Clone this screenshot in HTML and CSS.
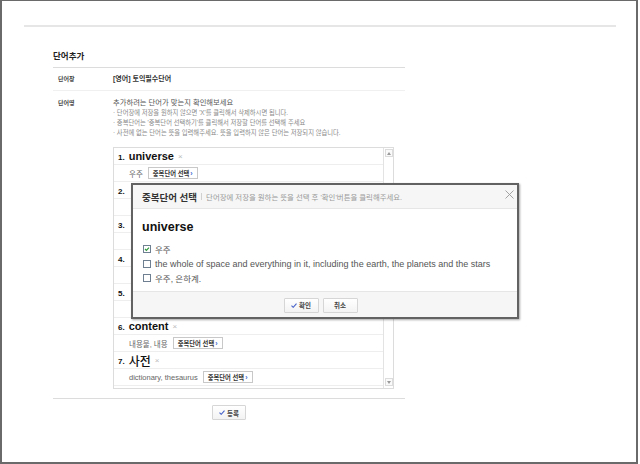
FILE: index.html
```html
<!DOCTYPE html>
<html lang="ko">
<head>
<meta charset="utf-8">
<title>단어추가</title>
<link rel="stylesheet" href="styles.css">
</head>
<body>
<div class="frame">
  <div class="panel">
    <h2 class="title">단어추가</h2>
    <div class="row row-book">
      <div class="label">단어장</div>
      <div class="value strong">[영어] 토익필수단어</div>
    </div>
    <div class="row row-words">
      <div class="label">단어명</div>
      <div class="value">
        <p class="guide">추가하려는 단어가 맞는지 확인해보세요</p>
        <ul class="notes">
          <li>· 단어장에 저장을 원하지 않으면 'X'를 클릭해서 삭제하시면 됩니다.</li>
          <li>· 중복단어는 '중복단어 선택하기'를 클릭해서 저장할 단어를 선택해 주세요</li>
          <li>· 사전에 없는 단어는 뜻을 입력해주세요. 뜻을 입력하지 않은 단어는 저장되지 않습니다.</li>
        </ul>
        <div class="wordbox">
          <div class="list">
            <div class="item-title"><span class="num">1.</span><span class="word">universe</span><span class="del">×</span></div>
            <div class="item-mean">우주<span class="dup">중복단어 선택<i>›</i></span></div>
            <div class="item-title"><span class="num">2.</span></div>
            <div class="item-mean"></div>
            <div class="item-title"><span class="num">3.</span></div>
            <div class="item-mean"></div>
            <div class="item-title"><span class="num">4.</span></div>
            <div class="item-mean"></div>
            <div class="item-title"><span class="num">5.</span></div>
            <div class="item-mean"></div>
            <div class="item-title"><span class="num">6.</span><span class="word">content</span><span class="del">×</span></div>
            <div class="item-mean">내용물, 내용<span class="dup">중복단어 선택<i>›</i></span></div>
            <div class="item-title"><span class="num">7.</span><span class="word ko">사전</span><span class="del">×</span></div>
            <div class="item-mean">dictionary, thesaurus<span class="dup">중복단어 선택<i>›</i></span></div>
          </div>
          <div class="scroll">
            <span class="arrow"><svg width="4" height="3" viewBox="0 0 4 3"><path d="M0 3 L2 0 L4 3Z" fill="#9a9a9a"/></svg></span>
            <span class="arrow"><svg width="4" height="3" viewBox="0 0 4 3"><path d="M0 0 L2 3 L4 0Z" fill="#9a9a9a"/></svg></span>
          </div>
        </div>
      </div>
    </div>
    <div class="actions">
      <button class="btn btn-submit" type="button"><svg class="chk" width="6" height="5" viewBox="0 0 6 5"><path d="M0.5 2.6 L2.2 4.3 L5.5 0.6" fill="none" stroke="#4a64c8" stroke-width="1.1"/></svg>등록</button>
    </div>
  </div>

  <div class="modal">
    <div class="modal-head">
      <strong class="modal-title">중복단어 선택</strong>
      <span class="bar"></span>
      <span class="modal-desc">단어장에 저장을 원하는 뜻을 선택 후 '확인'버튼을 클릭해주세요.</span>
      <svg class="close" width="9" height="9" viewBox="0 0 9 9"><path d="M0.5 0.5 L8.5 8.5 M8.5 0.5 L0.5 8.5" stroke="#9a9a9a" stroke-width="0.9"/></svg>
    </div>
    <div class="modal-body">
      <div class="modal-word">universe</div>
      <label class="opt"><svg class="cb" width="8" height="8" viewBox="0 0 8 8"><rect x="0.5" y="0.5" width="7" height="7" fill="#fff" stroke="#6d7f90"/><path d="M2 4 L3.4 5.4 L6 2.6" fill="none" stroke="#2f9a3a" stroke-width="1.2"/></svg><span class="ko-txt">우주</span></label>
      <label class="opt"><svg class="cb" width="8" height="8" viewBox="0 0 8 8"><rect x="0.5" y="0.5" width="7" height="7" fill="#fff" stroke="#6d7f90"/></svg><span>the whole of space and everything in it, including the earth, the planets and the stars</span></label>
      <label class="opt"><svg class="cb" width="8" height="8" viewBox="0 0 8 8"><rect x="0.5" y="0.5" width="7" height="7" fill="#fff" stroke="#6d7f90"/></svg><span class="ko-txt">우주, 은하계.</span></label>
    </div>
    <div class="modal-foot">
      <button class="btn btn-modal" type="button"><svg class="chk" width="6" height="5" viewBox="0 0 6 5"><path d="M0.5 2.6 L2.2 4.3 L5.5 0.6" fill="none" stroke="#4a64c8" stroke-width="1.1"/></svg>확인</button>
      <button class="btn btn-modal" type="button">취소</button>
    </div>
  </div>
</div>
</body>
</html>
```
FILE: styles.css
```css
html, body {
  margin: 0;
  padding: 0;
  background: #fff;
}
body {
  font-family: "Liberation Sans", "Noto Sans CJK KR", sans-serif;
  color: #333;
}
.frame {
  position: relative;
  width: 638px;
  height: 464px;
  box-sizing: border-box;
  border: 2px solid #6a6a6a;
  border-top-width: 1px;
  overflow: hidden;
  background: #fff;
}
.panel {
  margin: 24px 0 0 22px;
  width: 592px;
  box-sizing: border-box;
  border-top: 2px solid #e6e6e6;
  padding-left: 29px;
}
.title {
  width: 352px;
  margin: 23px 0 0;
  padding-bottom: 5px;
  border-bottom: 1px solid #dcdcdc;
  font-size: 8.5px;
  line-height: 12px;
  font-weight: bold;
  color: #222;
}
.row {
  display: flex;
  width: 352px;
  border-bottom: 1px solid #f0f0f0;
}
.label {
  width: 55px;
  padding-left: 5px;
  font-size: 6px;
  font-weight: bold;
  color: #444;
  flex: none;
}
.row-book {
  height: 22px;
  line-height: 22px;
}
.strong {
  font-size: 7px;
  font-weight: bold;
  color: #333;
}
.row-words {
  padding: 7px 0 9px;
  border-bottom: 1px solid #dcdcdc;
}
.row-words .label {
  line-height: 10px;
}
.value {
  flex: 1;
}
.guide {
  margin: 0;
  font-size: 7.3px;
  line-height: 10px;
  color: #555;
}
.notes {
  margin: 0;
  padding: 0;
  list-style: none;
  font-size: 6.3px;
  line-height: 10px;
  color: #8a8a8a;
  white-space: nowrap;
}
.wordbox {
  margin-top: 9px;
  width: 281px;
  height: 242px;
  box-sizing: border-box;
  border: 1px solid #dcdcdc;
  display: grid;
  grid-template-columns: 1fr 10px;
}
.list {
  display: flex;
  flex-direction: column;
}
.item-title,
.item-mean {
  height: 16px;
  border-bottom: 1px solid #eeeeee;
  display: flex;
  align-items: center;
  white-space: nowrap;
  overflow: hidden;
}
.item-title {
  padding-left: 4px;
  color: #111;
}
.num {
  font-size: 8px;
  font-weight: bold;
  margin-right: 4px;
  padding-top: 2px;
}
.word {
  font-size: 11px;
  font-weight: bold;
}
.word.ko {
  font-size: 12px;
  font-weight: 500;
}
.del {
  margin-left: 4px;
  font-size: 8px;
  color: #bbb;
}
.item-mean {
  padding-left: 15px;
  font-size: 7.5px;
  color: #666;
}
.dup {
  display: inline-flex;
  align-items: center;
  height: 12px;
  box-sizing: border-box;
  margin-left: 5px;
  padding: 0 4px;
  border: 1px solid #c8c8c8;
  background: #fff;
  font-size: 6.3px;
  font-weight: bold;
  color: #333;
}
.dup i {
  font-style: normal;
  color: #3c6cd0;
  margin-left: 1px;
  font-size: 7px;
}
.scroll {
  border-left: 1px solid #e3e3e3;
  display: flex;
  flex-direction: column;
  justify-content: space-between;
  align-items: center;
  padding: 1px 0 2px;
}
.arrow {
  width: 8px;
  height: 8px;
  box-sizing: border-box;
  border: 1px solid #dcdcdc;
  display: flex;
  align-items: center;
  justify-content: center;
  background: #fafafa;
}
.actions {
  width: 352px;
  display: flex;
  justify-content: center;
  padding-top: 6px;
}
.btn {
  display: inline-flex;
  align-items: center;
  justify-content: center;
  height: 15px;
  width: 34px;
  box-sizing: border-box;
  padding: 0;
  border: 1px solid #d6d6d6;
  border-radius: 1px;
  background: linear-gradient(#ffffff, #f3f3f3);
  font-family: "Liberation Sans", "Noto Sans CJK KR", sans-serif;
  font-size: 6.5px;
  font-weight: bold;
  color: #444;
}
.chk {
  margin-right: 2px;
}
.modal {
  position: absolute;
  left: 129px;
  top: 182px;
  width: 388px;
  height: 136px;
  box-sizing: border-box;
  border: 2px solid #626262;
  box-shadow: 1px 1px 2px rgba(0, 0, 0, 0.35);
  background: #fff;
  display: flex;
  flex-direction: column;
}
.modal-head {
  position: relative;
  height: 23px;
  border-bottom: 1px solid #e6e6e6;
  background: #f6f6f6;
  display: flex;
  align-items: center;
  padding-left: 9px;
}
.modal-title {
  font-size: 9.5px;
  font-weight: bold;
  color: #333;
}
.bar {
  width: 1px;
  height: 7px;
  background: #d0d0d0;
  margin: 0 4px;
}
.modal-desc {
  font-size: 7.4px;
  color: #999;
}
.close {
  position: absolute;
  right: 3px;
  top: 5px;
}
.modal-body {
  flex: 1;
  padding: 11px 0 0 10px;
}
.modal-word {
  font-size: 12.5px;
  line-height: 14px;
  font-weight: bold;
  color: #111;
  margin-bottom: 8px;
  margin-left: -1px;
}
.opt {
  display: flex;
  align-items: center;
  height: 14.5px;
  font-size: 9px;
  color: #555;
  white-space: nowrap;
}
.cb {
  margin-right: 4px;
  flex: none;
}
.ko-txt {
  font-size: 8.5px;
}
.modal-foot {
  height: 24px;
  border-top: 1px solid #e6e6e6;
  background: #f6f6f6;
  display: flex;
  align-items: center;
  justify-content: center;
  gap: 4px;
  padding-right: 9px;
  padding-top: 1px;
}
.btn-modal {
  width: 35px;
}
```
